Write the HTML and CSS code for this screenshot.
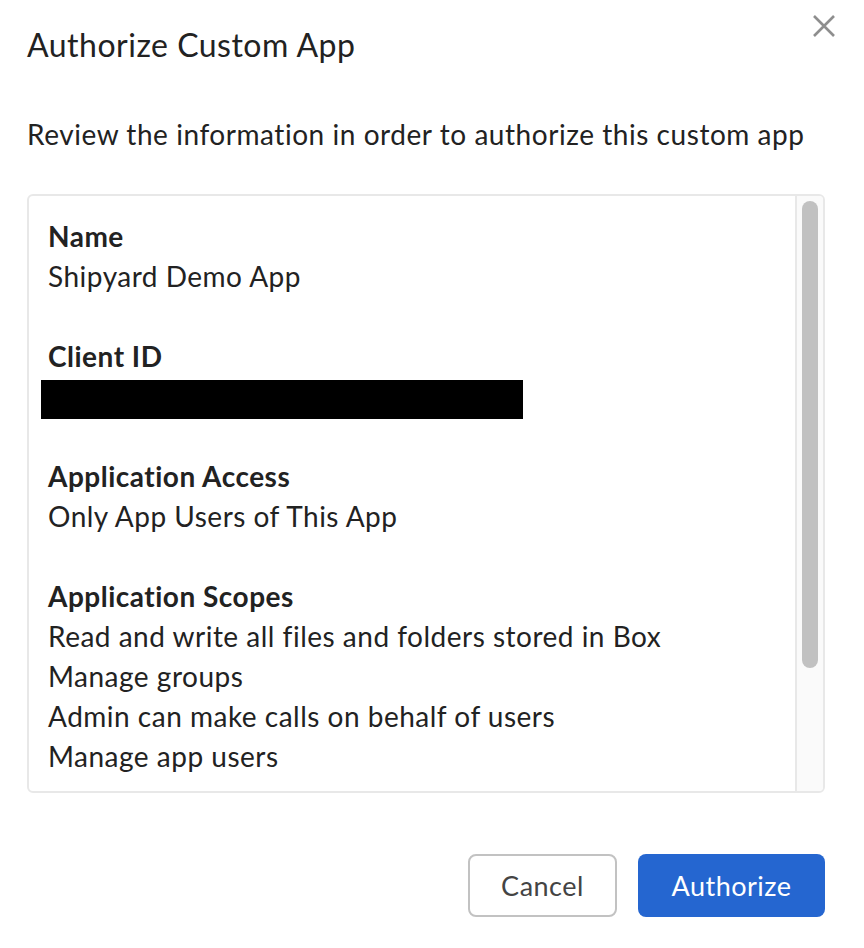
FILE: index.html
```html
<!DOCTYPE html>
<html>
<head>
<meta charset="utf-8">
<link rel="stylesheet" href="styles.css">
</head>
<body>
<div class="dialog">
  <div class="header">
    <h1 class="title">Authorize Custom App</h1>
    <button class="close" aria-label="Close">
      <svg width="24" height="24" viewBox="0 0 24 24"><path d="M2 2 L22 22 M22 2 L2 22" stroke="#8e8e8e" stroke-width="2.6" fill="none"/></svg>
    </button>
  </div>
  <p class="intro">Review the information in order to authorize this custom app</p>
  <div class="panel">
    <div class="content">
      <div class="section">
        <div class="label">Name</div>
        <div class="value">Shipyard Demo App</div>
      </div>
      <div class="section">
        <div class="label">Client ID</div>
        <div class="redacted"></div>
      </div>
      <div class="section">
        <div class="label">Application Access</div>
        <div class="value">Only App Users of This App</div>
      </div>
      <div class="section">
        <div class="label">Application Scopes</div>
        <div class="value">Read and write all files and folders stored in Box</div>
        <div class="value">Manage groups</div>
        <div class="value">Admin can make calls on behalf of users</div>
        <div class="value">Manage app users</div>
      </div>
    </div>
    <div class="track"><div class="thumb"></div></div>
  </div>
  <div class="footer">
    <button class="btn btn-cancel">Cancel</button>
    <button class="btn btn-primary">Authorize</button>
  </div>
</div>
</body>
</html>
```
FILE: styles.css
```css
html, body {
  margin: 0;
  padding: 0;
  background: #ffffff;
}
body {
  font-family: Lato, "Noto Sans", sans-serif;
  color: #222222;
}
.dialog {
  width: 864px;
  height: 948px;
  box-sizing: border-box;
  padding: 0 39px 0 27px;
  display: flex;
  flex-direction: column;
}
.header {
  display: flex;
  justify-content: space-between;
  align-items: flex-start;
  height: 90px;
}
.title {
  margin: 25px 0 0 0;
  font-size: 32px;
  line-height: 40px;
  font-weight: 400;
  letter-spacing: 0.5px;
  color: #222222;
}
.close {
  margin: 13px -12px 0 0;
  padding: 0;
  border: 0;
  background: transparent;
  width: 26px;
  height: 26px;
  display: flex;
  align-items: center;
  justify-content: center;
}
.intro {
  margin: 24px 0 0 0;
  font-size: 28px;
  line-height: 40px;
  letter-spacing: 0.55px;
  color: #222222;
}
.panel {
  margin-top: 40px;
  height: 599px;
  box-sizing: border-box;
  border: 2px solid #e8e8e8;
  border-radius: 6px;
  display: flex;
  overflow: hidden;
}
.content {
  flex: 1;
  overflow: hidden;
  padding: 20px 0 0 19px;
}
.section {
  margin-bottom: 40px;
}
.label {
  font-weight: 700;
  font-size: 28px;
  line-height: 40px;
  letter-spacing: 0.5px;
  color: #222222;
}
.value {
  font-size: 28px;
  line-height: 40px;
  letter-spacing: 0.5px;
  color: #222222;
}
.redacted {
  margin: 4px 0 -3px -7px;
  width: 482px;
  height: 39px;
  background: #000000;
}
.track {
  width: 28px;
  background: #fafafa;
  border-left: 2px solid #e8e8e8;
  padding: 5px 0 0 5px;
  box-sizing: border-box;
}
.thumb {
  width: 16px;
  height: 467px;
  border-radius: 8px;
  background: #c1c1c1;
}
.footer {
  margin-top: 61px;
  display: flex;
  justify-content: flex-end;
  gap: 21px;
}
.btn {
  height: 63px;
  border-radius: 8px;
  font-family: Lato, "Noto Sans", sans-serif;
  font-size: 27px;
  letter-spacing: 0.5px;
  padding: 0;
  box-sizing: border-box;
}
.btn-cancel {
  width: 149px;
  background: #ffffff;
  border: 2px solid #c2c2c2;
  color: #444444;
}
.btn-primary {
  width: 187px;
  background: #2566d0;
  border: 0;
  color: #ffffff;
}
```
